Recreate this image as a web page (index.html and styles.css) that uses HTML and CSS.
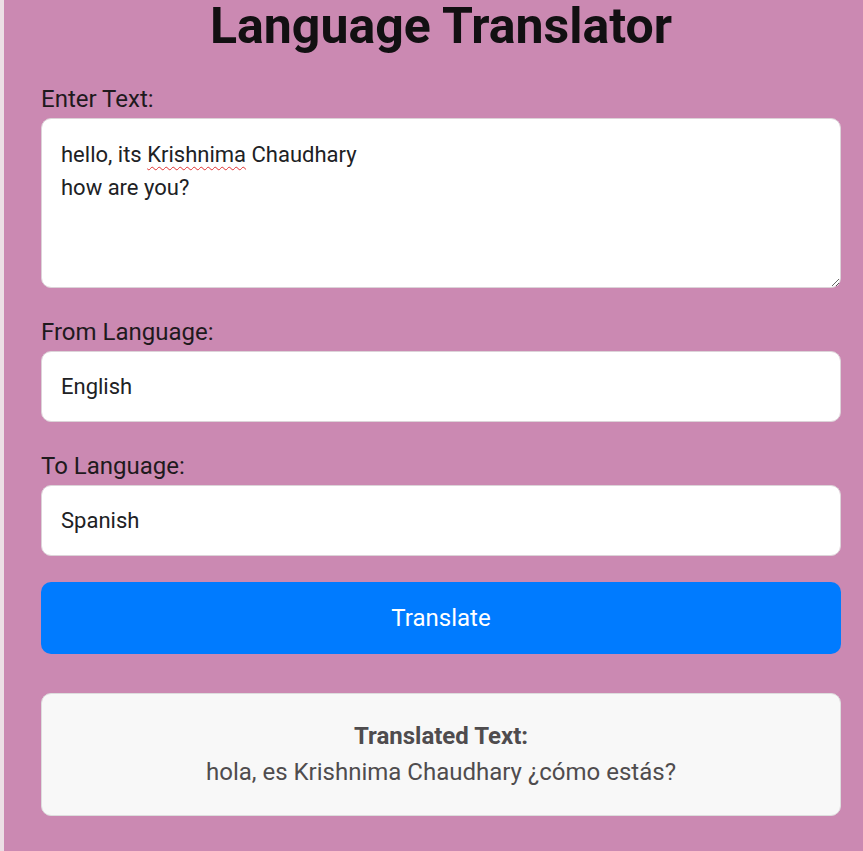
FILE: index.html
```html
<!DOCTYPE html>
<html lang="en">
<head>
<meta charset="utf-8">
<title>Language Translator</title>
<link rel="stylesheet" href="styles.css">
</head>
<body>
<div class="page">
  <div class="translator">
    <h1 class="title">Language Translator</h1>
    <div class="group">
      <label class="label">Enter Text:</label>
      <div class="textbox" contenteditable="true" spellcheck="false">hello, its <span class="misspelled">Krishnima</span> Chaudhary<br>how are you?</div>
    </div>
    <div class="group">
      <label class="label" for="from">From Language:</label>
      <input class="field" id="from" type="text" value="English">
    </div>
    <div class="group group-last">
      <label class="label" for="to">To Language:</label>
      <input class="field" id="to" type="text" value="Spanish">
    </div>
    <button class="btn" type="button">Translate</button>
    <div class="result">
      <div class="result-title">Translated Text:</div>
      <div class="result-text">hola, es Krishnima Chaudhary ¿cómo estás?</div>
    </div>
  </div>
</div>
</body>
</html>
```
FILE: styles.css
```css
html, body {
  margin: 0;
  padding: 0;
}
body {
  background: #ecdfe5;
  font-family: Roboto, "Liberation Sans", sans-serif;
  color: #1f1a1d;
}
.page {
  margin-left: 4px;
  background: #cb89b2;
  min-height: 851px;
  padding-left: 37px;
  overflow: hidden;
}
.translator {
  width: 800px;
}
.title {
  margin: 0 0 33px;
  font-size: 50px;
  line-height: 52px;
  font-weight: 700;
  text-align: center;
  color: #121012;
}
.group {
  margin-bottom: 30px;
}
.group-last {
  margin-bottom: 26px;
}
.label {
  display: block;
  font-size: 24px;
  line-height: 28px;
  margin-bottom: 5px;
  color: #1f1a1d;
}
.textbox {
  box-sizing: border-box;
  height: 170px;
  background: #fff;
  border: 1px solid #dcd3d8;
  border-radius: 10px;
  padding: 19px 19px;
  font-size: 22px;
  line-height: 33px;
  color: #202124;
  overflow: auto;
  resize: both;
  outline: none;
}
.misspelled {
  text-decoration: underline wavy #e03030;
  text-decoration-thickness: 1px;
  text-underline-offset: 4px;
}
.field {
  display: block;
  box-sizing: border-box;
  width: 100%;
  height: 71px;
  margin: 0;
  padding: 0 19px;
  background: #fff;
  border: 1px solid #dcd3d8;
  border-radius: 10px;
  font-family: inherit;
  font-size: 22px;
  color: #202124;
  outline: none;
}
.btn {
  display: block;
  width: 100%;
  height: 72px;
  margin: 0 0 39px;
  border: none;
  border-radius: 10px;
  background: #007bff;
  color: #fff;
  font-family: inherit;
  font-size: 24px;
}
.result {
  box-sizing: border-box;
  height: 123px;
  background: #f8f8f8;
  border: 1px solid #ddd;
  border-radius: 10px;
  padding: 24px 20px;
  text-align: center;
  font-size: 24px;
  line-height: 36px;
  color: #4f4c4e;
}
.result-title {
  font-weight: 700;
}
```
